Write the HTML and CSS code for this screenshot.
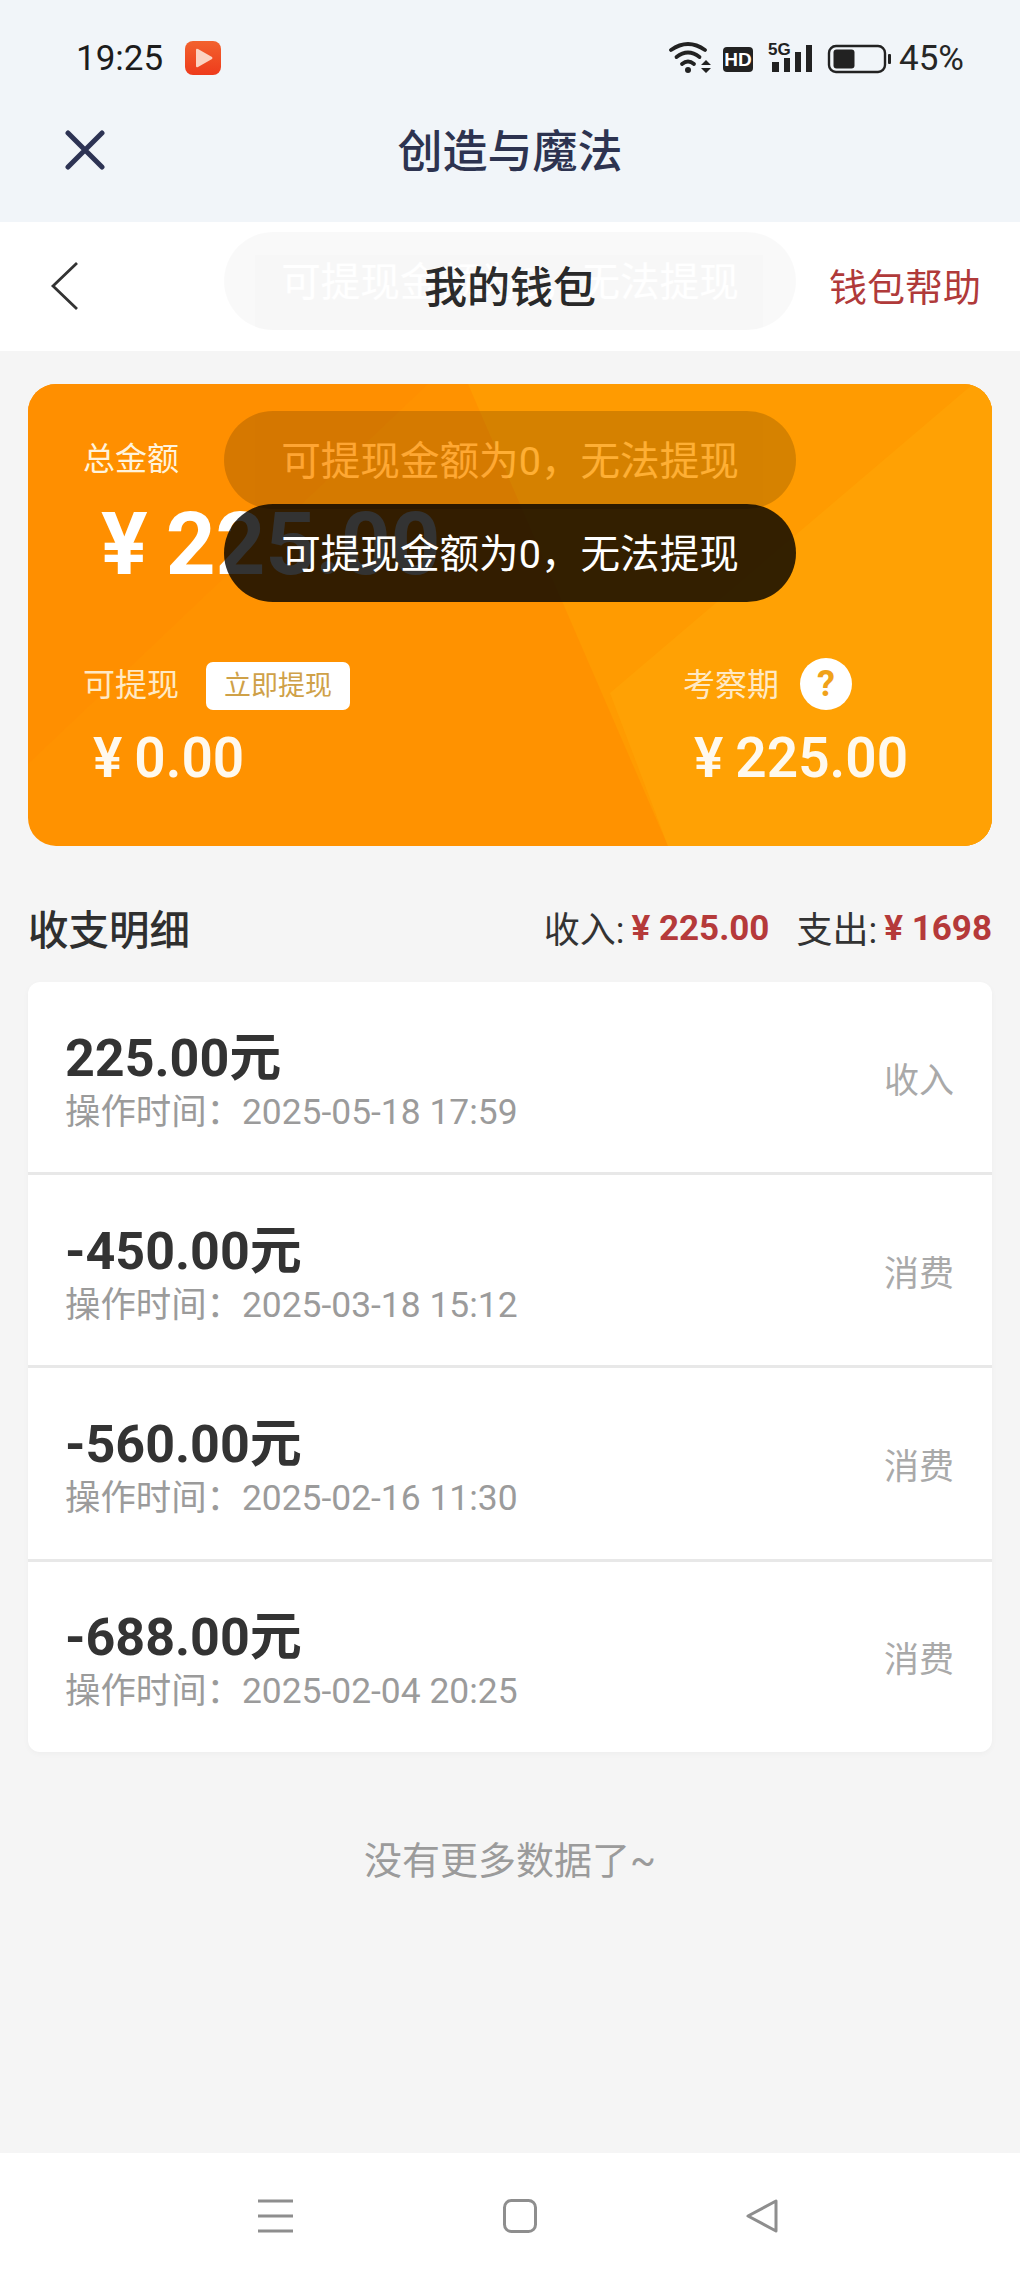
FILE: index.html
```html
<!doctype html>
<html lang="zh">
<head>
    <meta charset="UTF-8" />
    <title>我的钱包</title>
    <link rel="stylesheet" href="styles.css">
</head>
<body>
    <div class="page">
        <div class="top-area">
            <div class="status-bar">
                <div class="status-left">
                    <span class="status-time">19:25</span>
                    <svg class="app-icon" width="36" height="34" viewBox="0 0 36 34">
                        <defs>
                            <linearGradient id="appGrad" x1="0" y1="0" x2="0" y2="1">
                                <stop offset="0" stop-color="#f2622e" />
                                <stop offset="1" stop-color="#ee3b1c" />
                            </linearGradient>
                        </defs>
                        <rect width="36" height="34" rx="8" fill="url(#appGrad)" />
                        <path d="M13 8 L27 16 Q28 17 27 18 L13 26 Q11 27 11 25 V9 Q11 7 13 8Z" fill="#fbd3c2" />
                    </svg>
                </div>
                <div class="status-right">
                    <svg class="status-icons" width="224" height="34" viewBox="0 0 224 34">
                        <g fill="none" stroke="#222" stroke-width="3.800" stroke-linecap="round">
                            <path d="M4 9 Q21 -3 38 9" />
                            <path d="M9.500 16 Q21 7 32.500 16" />
                            <path d="M15 23 Q21 18 27 23" />
                        </g>
                        <circle cx="21" cy="29" r="3" fill="#222" />
                        <path d="M34 24 L39 19 L44 24Z M34 27 H44 L39 32Z" fill="#222" />
                        <rect x="56" y="6" width="30" height="25" rx="4" fill="#222" />
                        <text class="hd-text" x="71" y="25" text-anchor="middle">HD</text>
                        <text class="fiveg-text" x="101" y="14">5G</text>
                        <g fill="#222">
                            <rect x="105" y="21" width="7" height="10" />
                            <rect x="117" y="17" width="6" height="14" />
                            <rect x="128" y="11" width="6" height="20" />
                            <rect x="139" y="4" width="6" height="27" />
                        </g>
                        <rect x="162" y="5" width="56" height="26" rx="7" fill="none" stroke="#222" stroke-width="2.400" />
                        <rect x="166.500" y="8.500" width="21" height="19" rx="3" fill="#222" />
                        <rect x="221" y="13" width="3" height="10" rx="1" fill="#222" />
                    </svg>
                    <span class="status-battery">45%</span>
                </div>
            </div>
            <div class="web-title-bar">
                <svg class="close-icon" width="42" height="40" viewBox="0 0 42 40">
                    <path d="M4 3 L38 37 M38 3 L4 37" stroke="#2d3354" stroke-width="5" stroke-linecap="round" />
                </svg>
                <span class="web-title">创造与魔法</span>
            </div>
        </div>

        <div class="wallet-header">
            <svg class="back-icon" width="30" height="50" viewBox="0 0 30 50">
                <path d="M27 2 L3 25 L27 48" fill="none" stroke="#333" stroke-width="2.800" />
            </svg>
            <span class="wallet-title">我的钱包</span>
            <span class="wallet-help">钱包帮助</span>
        </div>

        <div class="content">
            <div class="balance-card">
                <svg class="card-bg" viewBox="0 0 964 462" preserveAspectRatio="none">
                    <rect width="964" height="462" fill="#ff9200" />
                    <polygon points="0,0 400,0 0,380" fill="#ff8f00" />
                    <polygon points="440,0 964,0 964,462 640,462" fill="#ff9b01" />
                    <polygon points="945,0 964,0 964,462 640,462 582,309" fill="#ffa104" />
                </svg>
                <div class="card-body">
                    <div class="total-label">总金额</div>
                    <div class="total-amount"><span class="yen">¥</span>225.00</div>
                    <div class="card-row">
                        <div class="card-col">
                            <div class="col-label">
                                <span>可提现</span>
                                <span class="withdraw-btn">立即提现</span>
                            </div>
                            <div class="col-amount"><span class="yen-small">¥</span>0.00</div>
                        </div>
                        <div class="card-col card-col-right">
                            <div class="col-label col-label-right">
                                <span>考察期</span>
                                <span class="help-dot">?</span>
                            </div>
                            <div class="col-amount col-amount-right"><span class="yen-small">¥</span>225.00</div>
                        </div>
                    </div>
                </div>
            </div>

            <div class="detail-header">
                <span class="detail-title">收支明细</span>
                <div class="detail-sums">
                    <span>收入:</span><span class="sum-red sum-first">¥ 225.00</span>
                    <span class="sum-out">支出:</span><span class="sum-red">¥ 1698</span>
                </div>
            </div>

            <div class="record-list">
                <div class="record-item">
                    <div class="record-main">
                        <div class="record-amount">225.00元</div>
                        <div class="record-time">操作时间：<span class="record-date">2025-05-18 17:59</span></div>
                    </div>
                    <span class="record-type">收入</span>
                </div>
                <div class="record-item">
                    <div class="record-main">
                        <div class="record-amount">-450.00元</div>
                        <div class="record-time">操作时间：<span class="record-date">2025-03-18 15:12</span></div>
                    </div>
                    <span class="record-type">消费</span>
                </div>
                <div class="record-item">
                    <div class="record-main">
                        <div class="record-amount">-560.00元</div>
                        <div class="record-time">操作时间：<span class="record-date">2025-02-16 11:30</span></div>
                    </div>
                    <span class="record-type">消费</span>
                </div>
                <div class="record-item">
                    <div class="record-main">
                        <div class="record-amount">-688.00元</div>
                        <div class="record-time">操作时间：<span class="record-date">2025-02-04 20:25</span></div>
                    </div>
                    <span class="record-type">消费</span>
                </div>
            </div>

            <div class="no-more">没有更多数据了~</div>
        </div>

        <div class="nav-bar">
            <svg width="36" height="34" viewBox="0 0 36 34">
                <path d="M0 2 H35 M0 17 H35 M0 32 H35" stroke="#8e8e8e" stroke-width="3.200" />
            </svg>
            <svg width="34" height="34" viewBox="0 0 34 34">
                <rect x="1.500" y="1.500" width="31" height="31" rx="7" fill="none" stroke="#8e8e8e" stroke-width="3" />
            </svg>
            <svg width="32" height="34" viewBox="0 0 32 34">
                <path d="M30 2 V32 L2 17Z" fill="none" stroke="#8e8e8e" stroke-width="3" stroke-linejoin="round" />
            </svg>
        </div>

        <div class="toast toast-ghost-top">可提现金额为0，无法提现</div>
        <div class="toast toast-ghost-mid">可提现金额为0，无法提现</div>
        <div class="toast toast-main">可提现金额为0，无法提现</div>
    </div>
</body>
</html>
```

FILE: styles.css
```css
html, body {
    margin: 0;
    padding: 0;
}

body {
    font-family: Roboto, "Noto Sans CJK SC", sans-serif;
    background-color: #f5f5f5;
}

.page {
    position: relative;
    width: 1020px;
    height: 2278px;
    display: flex;
    flex-direction: column;
    overflow: hidden;
}

.top-area {
    background-color: #f1f5f9;
    height: 222px;
}

.status-bar {
    height: 116px;
    display: flex;
    justify-content: space-between;
    align-items: center;
    padding: 0 56px 0 76px;
}

.status-left {
    display: flex;
    align-items: center;
    gap: 22px;
}

.status-time {
    font-size: 35px;
    color: #1c1c1c;
}

.status-right {
    display: flex;
    align-items: center;
    gap: 8px;
}

.status-battery {
    font-size: 35px;
    color: #262626;
}

.hd-text {
    font-family: "Liberation Sans", sans-serif;
    font-size: 19px;
    font-weight: 700;
    fill: #fff;
}

.fiveg-text {
    font-family: "Liberation Sans", sans-serif;
    font-size: 17px;
    font-weight: 700;
    fill: #222;
}

.web-title-bar {
    position: relative;
    height: 64px;
    display: flex;
    align-items: center;
    justify-content: center;
}

.close-icon {
    position: absolute;
    left: 64px;
    top: 14px;
}

.web-title {
    font-size: 45px;
    font-weight: 500;
    color: #2d3350;
}

.wallet-header {
    position: relative;
    height: 129px;
    box-sizing: border-box;
    padding-bottom: 5px;
    background-color: #fff;
    display: flex;
    align-items: center;
    justify-content: center;
}

.back-icon {
    position: absolute;
    left: 50px;
    top: 39px;
}

.wallet-title {
    font-size: 43px;
    font-weight: 500;
    color: #2b2b2b;
}

.wallet-help {
    position: absolute;
    right: 39px;
    font-size: 38px;
    color: #b03a3a;
}

.content {
    flex: 1;
    padding: 33px 28px 0;
}

.balance-card {
    position: relative;
    height: 462px;
    border-radius: 28px;
    overflow: hidden;
    color: #fff;
}

.card-bg {
    position: absolute;
    left: 0;
    top: 0;
    width: 100%;
    height: 100%;
}

.card-body {
    position: relative;
    padding: 52px 0 0 55px;
}

.total-label {
    font-size: 32px;
    line-height: 46px;
    color: #fff3dc;
}

.total-amount {
    margin: 12px 0 0 18px;
    font-size: 87px;
    line-height: 100px;
    font-weight: 700;
}

.yen {
    margin-right: 18px;
}

.card-row {
    display: flex;
    margin-top: 63px;
}

.card-col {
    width: 600px;
}

.card-col-right {
    width: 300px;
}

.col-label {
    display: flex;
    align-items: center;
    gap: 27px;
    height: 50px;
    font-size: 32px;
    color: #ffe9c4;
}

.col-label-right {
    gap: 21px;
}

.withdraw-btn {
    width: 144px;
    height: 48px;
    margin-top: 8px;
    line-height: 48px;
    text-align: center;
    background-color: #fff;
    border-radius: 7px;
    font-size: 27px;
    color: #cfa148;
}

.help-dot {
    width: 52px;
    height: 52px;
    line-height: 52px;
    border-radius: 50%;
    text-align: center;
    background-color: #fff;
    color: #f0a21a;
    font-size: 36px;
    font-weight: 700;
    margin-top: 4px;
}

.col-amount {
    margin: 21px 0 0 10px;
    font-size: 55px;
    line-height: 60px;
    font-weight: 600;
    color: #fff9ee;
}

.col-amount-right {
    margin-left: 11px;
}

.yen-small {
    margin-right: 12px;
}

.detail-header {
    display: flex;
    justify-content: space-between;
    align-items: center;
    height: 60px;
    margin-top: 51px;
}

.detail-title {
    font-size: 40.5px;
    color: #2f2f2f;
    font-weight: 500;
}

.detail-sums {
    font-size: 36px;
    color: #333;
    display: flex;
    align-items: center;
}

.sum-red {
    font-weight: 700;
    font-size: 35px;
    color: #b53a3a;
    margin-left: 7px;
    margin-top: 3px;
}

.sum-out {
    margin-left: 27px;
}

.record-list {
    margin-top: 25px;
    background-color: #fff;
    border-radius: 12px;
    box-shadow: 0 2px 6px rgba(0, 0, 0, 0.03);
    overflow: hidden;
}

.record-item {
    height: 190.2px;
    display: flex;
    justify-content: space-between;
    align-items: center;
    padding: 0 38px 0 37px;
    border-bottom: 3px solid #e8e8e8;
}

.record-item:last-child {
    border-bottom: none;
}

.record-main {
    padding-top: 10px;
}

.record-amount {
    font-size: 52px;
    line-height: 60px;
    font-weight: 700;
    color: #333;
}

.record-time {
    font-size: 35.4px;
    line-height: 47px;
    color: #9b9b9b;
}

.record-type {
    font-size: 35px;
    color: #a9a9a9;
}

.no-more {
    margin-top: 78px;
    text-align: center;
    font-size: 38px;
    color: #9b9b9b;
}

.nav-bar {
    height: 125px;
    background-color: #fff;
    display: flex;
    align-items: flex-start;
    padding: 46px 242px 0 258px;
    justify-content: space-between;
    box-sizing: border-box;
}

.toast {
    position: absolute;
    left: 224px;
    width: 572px;
    height: 98px;
    line-height: 102px;
    border-radius: 49px;
    text-align: center;
    font-size: 39.6px;
    color: #fff;
    background-color: rgba(0, 0, 0, 0.8);
}

.toast-ghost-top {
    top: 232px;
    opacity: 0.03;
}

.toast-ghost-mid {
    top: 411px;
    opacity: 0.2;
}

.toast-main {
    top: 504px;
}
```
